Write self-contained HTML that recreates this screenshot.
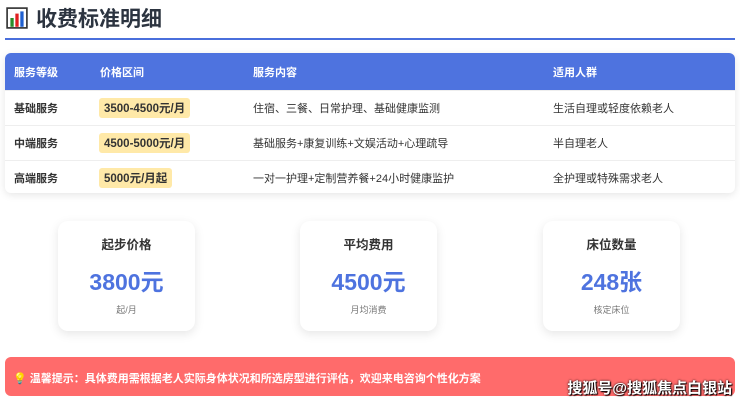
<!DOCTYPE html><html><head><meta charset="utf-8"><style>
body{margin:0;width:740px;height:404px;background:#fff;font-family:"Liberation Sans","Noto Sans CJK SC",sans-serif;position:relative;overflow:hidden}
.t{position:absolute;left:6px;top:3px;font-size:21px;font-weight:bold;color:#2c3440;display:flex;align-items:center}
.line{position:absolute;left:5px;top:38px;width:730px;height:2px;background:#4a6fdc}
.tb{position:absolute;left:5px;top:53px;width:730px;height:140px;border-radius:6px;box-shadow:0 2px 8px rgba(0,0,0,.1);overflow:hidden}
.row{position:relative;height:34px;border-bottom:1px solid #eee;font-size:11px;color:#333}
.hd{height:37px;background:#4e73df;color:#fff;font-weight:bold}
.row span{position:absolute;top:50%;transform:translateY(-50%)}
.c1{left:9px;font-weight:bold}.c2{left:95px}.c3{left:248px}.c4{left:548px}
.tag{background:#ffe9a8;font-weight:bold;padding:2px 5px;border-radius:3px;font-size:11.5px;color:#333;margin-left:-1px}
.card{position:absolute;top:221px;width:137px;height:110px;border-radius:10px;box-shadow:0 3px 10px rgba(0,0,0,.1);text-align:center}
.card .a{margin-top:13px;font-size:12.5px;font-weight:bold;color:#333}
.card .b{margin-top:10px;font-size:23px;font-weight:bold;color:#4e73df}
.card .c{margin-top:6px;font-size:9px;color:#777}
.bn{position:absolute;left:5px;top:357px;width:730px;height:39px;background:#ff6b6b;border-radius:6px;color:#fff;font-size:11px;font-weight:bold}
.wm{position:absolute;right:8px;top:377px;font-size:15px;color:#fff;font-weight:bold;text-shadow:0 0 2px #000,1px 1px 1px #000}
</style></head><body>
<div class="t"><svg width="22" height="22" viewBox="0 0 20 20" style="margin-right:8px"><rect x="1" y="1" width="18" height="18" fill="#fff" stroke="#333" stroke-width="1.5"/><rect x="4" y="10" width="3" height="8" fill="#2a8d2a"/><rect x="8.5" y="6" width="3" height="12" fill="#e02020"/><rect x="13" y="4" width="3" height="14" fill="#2060d0"/></svg>收费标准明细</div>
<div class="line"></div>
<div class="tb">
<div class="row hd"><span class="c1">服务等级</span><span class="c2">价格区间</span><span class="c3">服务内容</span><span class="c4">适用人群</span></div>
<div class="row"><span class="c1">基础服务</span><span class="c2 tag">3500-4500元/月</span><span class="c3">住宿、三餐、日常护理、基础健康监测</span><span class="c4">生活自理或轻度依赖老人</span></div>
<div class="row"><span class="c1">中端服务</span><span class="c2 tag">4500-5000元/月</span><span class="c3">基础服务+康复训练+文娱活动+心理疏导</span><span class="c4">半自理老人</span></div>
<div class="row" style="border:0"><span class="c1">高端服务</span><span class="c2 tag">5000元/月起</span><span class="c3">一对一护理+定制营养餐+24小时健康监护</span><span class="c4">全护理或特殊需求老人</span></div>
</div>
<div class="card" style="left:58px"><div class="a">起步价格</div><div class="b">3800元</div><div class="c">起/月</div></div>
<div class="card" style="left:300px"><div class="a">平均费用</div><div class="b">4500元</div><div class="c">月均消费</div></div>
<div class="card" style="left:543px"><div class="a">床位数量</div><div class="b">248张</div><div class="c">核定床位</div></div>
<div class="bn"><div style="position:absolute;left:8px;top:13px">💡 温馨提示：具体费用需根据老人实际身体状况和所选房型进行评估，欢迎来电咨询个性化方案</div></div>
<div class="wm">搜狐号@搜狐焦点白银站</div>
</body></html>
